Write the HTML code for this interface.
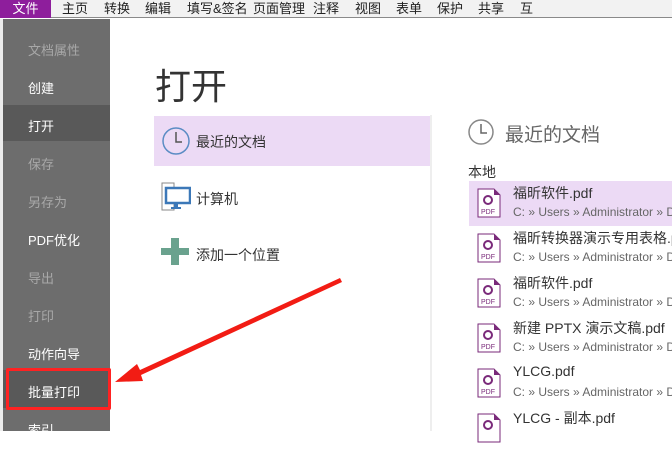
<!DOCTYPE html>
<html><head><meta charset="utf-8"><style>
*{margin:0;padding:0;box-sizing:border-box}
body{width:672px;height:431px;overflow:hidden;background:#fff;font-family:"Liberation Sans","Noto Sans CJK SC",sans-serif;position:relative}
.menu{position:absolute;left:0;top:0;width:672px;height:18px;background:#f2f2f2;border-bottom:1px solid #8a8a8a;font-size:13px;color:#222}
.menu span{position:absolute;top:0;line-height:17px}
.menu .f{left:0;width:51px;height:18px;background:#8e1e9c;color:#fff;text-align:center}
.side{position:absolute;left:3px;top:19px;width:107px;height:412px;background:#6d6d6d}
.strip{position:absolute;left:0;top:19px;width:3px;height:412px;background:#ececec}
.side div{position:absolute;left:25px;font-size:13px;color:#fff}
.side .d{color:#a8a8a8}
.sel{position:absolute;left:3px;width:107px;height:36px;background:#595959}
h1{position:absolute;left:155px;top:58px;font-size:36px;font-weight:normal;color:#333;font-family:"Noto Sans CJK SC",sans-serif}
.vl{position:absolute;left:430px;top:115px;width:2px;height:316px;background:#eee}
.txt{position:absolute;font-size:14px;color:#333}
.item{position:absolute;left:469px;width:203px;height:45px}
.item .n{position:absolute;left:44px;top:2px;font-size:14px;color:#333;white-space:nowrap}
.item .p{position:absolute;left:44px;top:24px;font-size:12px;color:#666;white-space:nowrap}
.item svg{position:absolute;left:8px;top:7px}
</style></head><body>
<div class="menu">
<span class="f">文件</span><span style="left:62px">主页</span><span style="left:104px">转换</span><span style="left:145px">编辑</span><span style="left:187px">填写&amp;签名</span><span style="left:253px">页面管理</span><span style="left:313px">注释</span><span style="left:355px">视图</span><span style="left:396px">表单</span><span style="left:437px">保护</span><span style="left:478px">共享</span><span style="left:520px">互</span>
</div>
<div class="strip"></div>
<div class="side"></div>
<div class="sel" style="top:105px"></div>
<div class="sel" style="top:370px;height:38px"></div>
<div class="side" style="background:none">
<div class="d" style="top:21px">文档属性</div>
<div style="top:59px">创建</div>
<div style="top:97px">打开</div>
<div class="d" style="top:135px">保存</div>
<div class="d" style="top:173px">另存为</div>
<div style="top:211px">PDF优化</div>
<div class="d" style="top:249px">导出</div>
<div class="d" style="top:287px">打印</div>
<div style="top:325px">动作向导</div>
<div style="top:363px">批量打印</div>
<div style="top:401px">索引</div>
</div>
<div style="position:absolute;left:6px;top:368px;width:105px;height:42px;border:3px solid #f22;border-radius:2px"></div>
<h1>打开</h1>
<div style="position:absolute;left:154px;top:116px;width:276px;height:50px;background:#ecdaf5"></div>
<div class="vl"></div>
<svg style="position:absolute;left:161px;top:126px" width="30" height="30"><circle cx="15" cy="15" r="13" fill="none" stroke="#5b8cc4" stroke-width="1.5"/><path d="M15 6v10h6" fill="none" stroke="#555" stroke-width="1.5"/></svg>
<div class="txt" style="left:196px;top:132px">最近的文档</div>
<svg style="position:absolute;left:161px;top:182px" width="30" height="30"><rect x="1" y="1" width="12" height="27" fill="#fff" stroke="#888"/><rect x="5" y="6" width="24" height="15" fill="#fff" stroke="#3c78b8" stroke-width="2.5"/><rect x="13" y="21" width="4" height="4" fill="#3c78b8"/><rect x="10" y="25" width="10" height="2" fill="#3c78b8"/></svg>
<div class="txt" style="left:196px;top:189px">计算机</div>
<svg style="position:absolute;left:161px;top:238px" width="28" height="28"><rect x="10" y="0" width="8" height="27" fill="#6aa28e"/><rect x="0" y="10" width="28" height="7" fill="#6aa28e"/></svg>
<div class="txt" style="left:196px;top:245px">添加一个位置</div>
<svg style="position:absolute;left:0;top:0" width="672" height="431"><polygon points="342,282 340,278 140,370 137,364 115,382 143,381 141,375" fill="#f21c14"/></svg>
<svg style="position:absolute;left:467px;top:118px" width="28" height="28"><circle cx="14" cy="14" r="12" fill="none" stroke="#888" stroke-width="1.5"/><path d="M14 6v9h6" fill="none" stroke="#666" stroke-width="1.5"/></svg>
<div style="position:absolute;left:505px;top:120px;font-size:19px;color:#666">最近的文档</div>
<div class="txt" style="left:468px;top:162px">本地</div>
<div class="item" style="top:181px;background:#ecdaf5"><svg width="24" height="30"><path d="M1 1h16l6 6v22H1z" fill="#fff" stroke="#7a2a7a"/><path d="M17 1v6h6z" fill="#7a2a7a"/><circle cx="11" cy="12" r="4" fill="none" stroke="#7a2a7a" stroke-width="2"/><text x="4" y="26" font-size="7" fill="#7a2a7a" font-family="Liberation Sans">PDF</text></svg><div class="n">福昕软件.pdf</div><div class="p">C: » Users » Administrator » D</div></div>
<div class="item" style="top:226px"><svg width="24" height="30"><path d="M1 1h16l6 6v22H1z" fill="#fff" stroke="#7a2a7a"/><path d="M17 1v6h6z" fill="#7a2a7a"/><circle cx="11" cy="12" r="4" fill="none" stroke="#7a2a7a" stroke-width="2"/><text x="4" y="26" font-size="7" fill="#7a2a7a" font-family="Liberation Sans">PDF</text></svg><div class="n">福昕转换器演示专用表格.p</div><div class="p">C: » Users » Administrator » D</div></div>
<div class="item" style="top:271px"><svg width="24" height="30"><path d="M1 1h16l6 6v22H1z" fill="#fff" stroke="#7a2a7a"/><path d="M17 1v6h6z" fill="#7a2a7a"/><circle cx="11" cy="12" r="4" fill="none" stroke="#7a2a7a" stroke-width="2"/><text x="4" y="26" font-size="7" fill="#7a2a7a" font-family="Liberation Sans">PDF</text></svg><div class="n">福昕软件.pdf</div><div class="p">C: » Users » Administrator » D</div></div>
<div class="item" style="top:316px"><svg width="24" height="30"><path d="M1 1h16l6 6v22H1z" fill="#fff" stroke="#7a2a7a"/><path d="M17 1v6h6z" fill="#7a2a7a"/><circle cx="11" cy="12" r="4" fill="none" stroke="#7a2a7a" stroke-width="2"/><text x="4" y="26" font-size="7" fill="#7a2a7a" font-family="Liberation Sans">PDF</text></svg><div class="n">新建 PPTX 演示文稿.pdf</div><div class="p">C: » Users » Administrator » D</div></div>
<div class="item" style="top:361px"><svg width="24" height="30"><path d="M1 1h16l6 6v22H1z" fill="#fff" stroke="#7a2a7a"/><path d="M17 1v6h6z" fill="#7a2a7a"/><circle cx="11" cy="12" r="4" fill="none" stroke="#7a2a7a" stroke-width="2"/><text x="4" y="26" font-size="7" fill="#7a2a7a" font-family="Liberation Sans">PDF</text></svg><div class="n">YLCG.pdf</div><div class="p">C: » Users » Administrator » D</div></div>
<div class="item" style="top:406px"><svg width="24" height="30"><path d="M1 1h16l6 6v22H1z" fill="#fff" stroke="#7a2a7a"/><path d="M17 1v6h6z" fill="#7a2a7a"/><circle cx="11" cy="12" r="4" fill="none" stroke="#7a2a7a" stroke-width="2"/></svg><div class="n">YLCG - 副本.pdf</div></div>
</body></html>
